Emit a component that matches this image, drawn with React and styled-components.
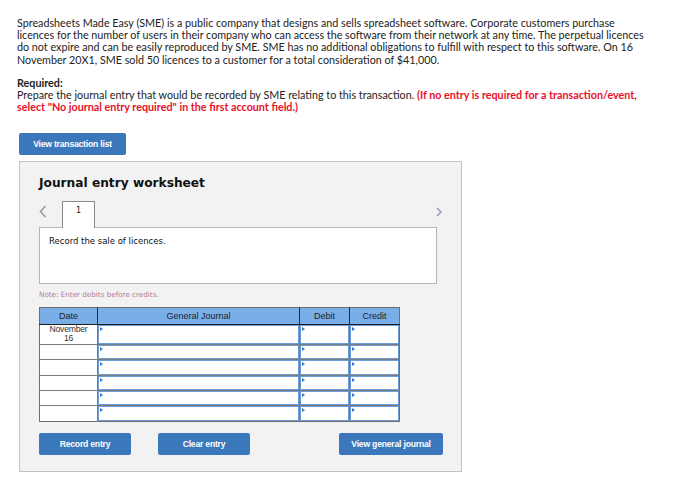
import styled, { createGlobalStyle } from 'styled-components';

const GlobalStyle = createGlobalStyle`
  body {
    margin: 0;
    background: #fff;
    font-family: 'Lato', 'Liberation Sans', sans-serif;
  }
`;

const Page = styled.div`
  width: 683px;
  height: 488px;
  padding: 17px 0 0 17px;
  box-sizing: border-box;
  overflow: hidden;
`;

const Para = styled.p`
  margin: 0 0 11px 0;
  font-size: 10.75px;
  line-height: 12.2px;
  color: #222;
  white-space: nowrap;
`;

const Strong = styled.span`
  font-weight: 700;
`;

const Red = styled.span`
  color: #e8102a;
  font-weight: 700;
`;

const BlueButton = styled.button`
  display: flex;
  align-items: center;
  justify-content: center;
  width: ${p => p.$w}px;
  height: 22px;
  padding: 0;
  border: none;
  border-radius: 2px;
  background: #3a77bb;
  color: #fff;
  font-family: 'Liberation Sans', Arial, sans-serif;
  font-weight: 700;
  font-size: 8.6px;
  letter-spacing: -0.2px;
  cursor: pointer;
`;

const TopButtonRow = styled.div`
  margin: 20px 0 6px 2px;
`;

const Panel = styled.div`
  margin-left: 2px;
  width: 443px;
  height: 311px;
  box-sizing: border-box;
  background: #f2f2f2;
  border: 1px solid #c2c2c2;
  padding: 12px 24px 0 19px;
`;

const Title = styled.h2`
  margin: 0;
  font-family: 'DejaVu Sans', Verdana, sans-serif;
  font-size: 12.2px;
  font-weight: 700;
  color: #111;
  line-height: 18px;
`;

const NavRow = styled.div`
  display: flex;
  align-items: flex-end;
  margin: 8px -5px 0 0;
  height: 27px;
`;

const Arrow = styled.div`
  display: flex;
  align-items: center;
  height: 27px;
  padding-bottom: 4px;
  box-sizing: border-box;
  width: ${p => p.$w}px;
  justify-content: ${p => (p.$right ? 'flex-end' : 'flex-start')};
`;

const Tab = styled.div`
  width: 33px;
  height: 27px;
  box-sizing: border-box;
  border: 1px solid #8a8a8a;
  border-bottom: none;
  background: #fff;
  margin-left: 14px;
  margin-bottom: -1px;
  position: relative;
  z-index: 1;
  display: flex;
  justify-content: center;
  padding-top: 4px;
  font-family: 'DejaVu Sans', Verdana, sans-serif;
  font-size: 8px;
  color: #1a1a1a;
`;

const Spacer = styled.div`
  flex: 1;
`;

const Box = styled.div`
  width: 398px;
  height: 57px;
  box-sizing: border-box;
  background: #fff;
  border: 1px solid #b5b5b5;
  padding: 8px 9px;
  font-family: 'DejaVu Sans', Verdana, sans-serif;
  font-size: 8.5px;
  color: #111;
`;

const Note = styled.div`
  margin-top: 6px;
  font-family: 'DejaVu Sans', Verdana, sans-serif;
  font-size: 7.2px;
  color: #b27a98;
`;

const Table = styled.table`
  margin-top: 8px;
  border-collapse: collapse;
  width: 360px;
  table-layout: fixed;
  font-family: 'Liberation Sans', Arial, sans-serif;
  font-size: 9px;
  color: #222;
  border: 1px solid #6e6e6e;
`;

const Th = styled.th`
  width: ${p => p.$w}px;
  height: 16px;
  padding: 0;
  background: #79aee8;
  font-weight: 400;
  border-left: 1px solid #2b2b2b;
  border-bottom: 1px solid #1f1f1f;
  &:first-child {
    border-left: none;
  }
`;

const DateCell = styled.td`
  height: ${p => p.$h}px;
  padding: 0;
  background: #fff;
  border-top: 1px solid #7a7a7a;
  text-align: center;
  vertical-align: top;
  font-size: 8.6px;
  line-height: 9px;
  letter-spacing: -0.2px;
  color: #333;
`;

const InputCell = styled.td`
  height: ${p => p.$h}px;
  padding: 0;
  border-left: 1px solid #7a7a7a;
  border-top: 1px solid #7a7a7a;
  background: #fff;
`;

const Field = styled.div`
  position: relative;
  height: 100%;
  box-sizing: border-box;
  border: 1px solid #6c9bd6;
  background: #fff;
  &::before {
    content: '';
    position: absolute;
    left: 1px;
    top: 1px;
    border-top: 2px solid transparent;
    border-bottom: 2px solid transparent;
    border-left: 3px solid #3b78cc;
  }
`;

const ButtonRow = styled.div`
  display: flex;
  margin-top: 11px;
  width: 404px;
`;

const rows = [
  { h: 19, date: ['November', '16'] },
  { h: 14 },
  { h: 15 },
  { h: 14 },
  { h: 14 },
  { h: 15 },
];

function Chevron({ right }) {
  return right ? (
    <svg width="6" height="10" viewBox="0 0 6 10">
      <path d="M1 1 L5 5 L1 9" fill="none" stroke="#8e9bb0" strokeWidth="1.5" />
    </svg>
  ) : (
    <svg width="8" height="13" viewBox="0 0 8 13">
      <path d="M6.5 1 L1.5 6.5 L6.5 12" fill="none" stroke="#9a9a9a" strokeWidth="1.6" />
    </svg>
  );
}

export default function App() {
  return (
    <>
      <GlobalStyle />
      <Page>
        <Para>
          Spreadsheets Made Easy (SME) is a public company that designs and sells spreadsheet software. Corporate customers purchase
          <br />
          licences for the number of users in their company who can access the software from their network at any time. The perpetual licences
          <br />
          do not expire and can be easily reproduced by SME. SME has no additional obligations to fulfill with respect to this software. On 16
          <br />
          November 20X1, SME sold 50 licences to a customer for a total consideration of $41,000.
        </Para>
        <Para>
          <Strong>Required:</Strong>
          <br />
          Prepare the journal entry that would be recorded by SME relating to this transaction.{' '}
          <Red>(If no entry is required for a transaction/event,</Red>
          <br />
          <Red>select "No journal entry required" in the first account field.)</Red>
        </Para>
        <TopButtonRow>
          <BlueButton $w={107}>View transaction list</BlueButton>
        </TopButtonRow>
        <Panel>
          <Title>Journal entry worksheet</Title>
          <NavRow>
            <Arrow $w={9}>
              <Chevron />
            </Arrow>
            <Tab>1</Tab>
            <Spacer />
            <Arrow $w={12} $right>
              <Chevron right />
            </Arrow>
          </NavRow>
          <Box>Record the sale of licences.</Box>
          <Note>Note: Enter debits before credits.</Note>
          <Table>
            <thead>
              <tr>
                <Th $w={57}>Date</Th>
                <Th $w={201}>General Journal</Th>
                <Th $w={49}>Debit</Th>
                <Th $w={49}>Credit</Th>
              </tr>
            </thead>
            <tbody>
              {rows.map((r, i) => (
                <tr key={i}>
                  <DateCell $h={r.h}>
                    {r.date && (
                      <>
                        {r.date[0]}
                        <br />
                        {r.date[1]}
                      </>
                    )}
                  </DateCell>
                  <InputCell $h={r.h}><Field /></InputCell>
                  <InputCell $h={r.h}><Field /></InputCell>
                  <InputCell $h={r.h}><Field /></InputCell>
                </tr>
              ))}
            </tbody>
          </Table>
          <ButtonRow>
            <BlueButton $w={92}>Record entry</BlueButton>
            <BlueButton $w={92} style={{ marginLeft: 27 }}>Clear entry</BlueButton>
            <Spacer />
            <BlueButton $w={104}>View general journal</BlueButton>
          </ButtonRow>
        </Panel>
      </Page>
    </>
  );
}
